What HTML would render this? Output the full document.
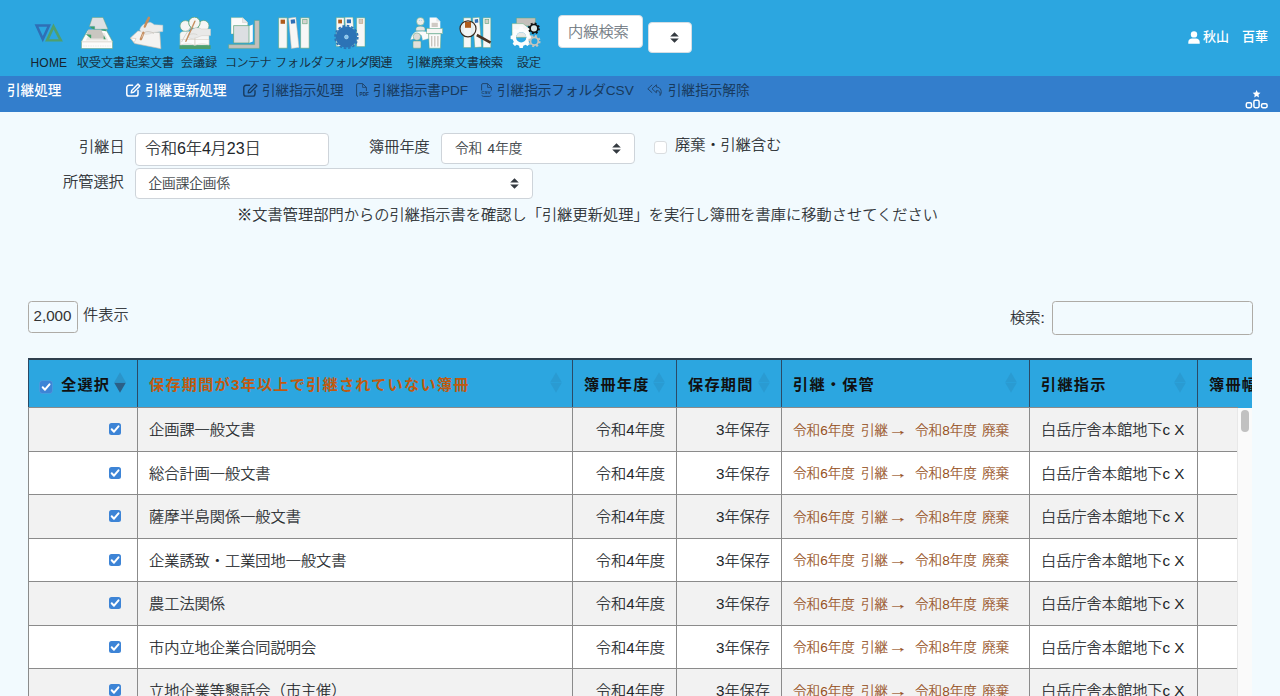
<!DOCTYPE html>
<html lang="ja">
<head>
<meta charset="utf-8">
<title>引継処理</title>
<style>
*{box-sizing:border-box;margin:0;padding:0}
html,body{width:1280px;height:696px;overflow:hidden}
body{background:#f2fafe;font-family:"Liberation Sans","Noto Sans CJK JP",sans-serif;font-size:15.2px;color:#212529;position:relative;font-weight:300;-webkit-text-stroke-width:.22px}
.abs{position:absolute;white-space:nowrap}
#top{position:absolute;left:0;top:0;width:1280px;height:76px;background:#2ca6e0}
#sub{position:absolute;left:0;top:76px;width:1280px;height:36px;background:#337ecc}
.nl{position:absolute;top:56px;font-size:12px;line-height:14px;color:#16232e;font-weight:300;white-space:nowrap}
.ni{position:absolute;top:17px;width:32px;height:32px}
.sl{position:absolute;top:82px;font-size:14px;line-height:16px;white-space:nowrap;color:rgba(10,30,60,.62)}
.sl.on{color:#fff;font-weight:500}
.sl2{font-size:13.6px;line-height:18px;color:#183a5d;font-weight:400;-webkit-text-stroke-width:0}
.lab{position:absolute;font-size:15.2px;line-height:20px;white-space:nowrap;color:#212529}
.box{position:absolute;background:#fff;border:1px solid #ced4da;border-radius:4px}
.th{position:absolute;top:0;height:48px;font-weight:700;-webkit-text-stroke-width:0;letter-spacing:1.2px;line-height:20px;padding-top:15px;color:#111;white-space:nowrap;border-right:1px solid #2b4a66}
.row{position:absolute;left:0;width:1210px;height:44px;border-top:1px solid #8b8b8b}
.row.o{background:#f2f2f2}
.row.e{background:#fff}
.c{position:absolute;top:0;height:43px;line-height:20px;padding-top:12px;white-space:nowrap;border-right:1px solid #8b8b8b}
.cb{position:absolute;width:12px;height:12px;border-radius:2.5px;background:#3d84d6}
.cb svg{position:absolute;left:0;top:0}
.hk{font-size:13.6px;color:#96501c}
.hk span{position:absolute;top:12.5px;line-height:20px}
i{font-style:normal;-webkit-text-stroke-width:0}
</style>
</head>
<body>
<div id="top">
<!-- HOME -->
<svg class="ni" style="left:33px" viewBox="0 0 32 32"><path d="M1.6 7.3H18L9.8 25.3ZM5.5 9.8L9.8 19L14.1 9.8Z" fill="#2f6fb6" fill-rule="evenodd"/><path d="M20.4 6.5L29.9 24.6H12.1ZM20.6 12.6L16.1 22.2H25.7Z" fill="#4f9f6c" fill-rule="evenodd"/></svg>
<div class="nl" style="left:30.5px;letter-spacing:.2px"><i>HOME</i></div>
<!-- tray -->
<svg class="ni" style="left:81px" viewBox="0 0 32 32">
<path d="M6.5 13.5L0.4 24.6V31.6H31.6V24.6L25.5 13.5Z" fill="#fcfcfb" stroke="#6aa27a" stroke-width=".6"/>
<path d="M0.6 24.8H31.4" stroke="#d6cfc6" stroke-width=".8"/>
<path d="M2.2 29H29.8" stroke="#ecebe8" stroke-width="1" stroke-dasharray="1.4 1"/>
<path d="M4.8 23.4L8.4 16H23.6L27.2 23.4Z" fill="#e9e7e3"/>
<path d="M7.4 12.4H20.2L23.8 21.6H11.2L5.4 17.2Z" fill="#c9c6c0"/>
<path d="M11.3 0.5H22L27 12.3H13.6V9.4H8.3Z" fill="#dde0e3" stroke="#6aa27a" stroke-width=".5"/>
<path d="M9 9.7H13.4V12.6L10.4 11.2Z" fill="#3f9f68"/><path d="M4.8 17.2L10.2 17.8V21.8Z" fill="#3f9f68"/><path d="M20 12.6H24.4L25.4 14.4Z" fill="#3f9f68"/><path d="M22.8 18.2L24.8 22.2H22.6Z" fill="#3f9f68"/>
</svg>
<div class="nl" style="left:77px">収受文書</div>
<!-- writing -->
<svg class="ni" style="left:130px;overflow:visible" viewBox="0 0 32 32">
<path d="M0.3 21L7.9 13.9L29.8 15.6L30.9 31.7L4.6 26.5Z" fill="#f4f3f1" stroke="#c9b9a6" stroke-width=".6"/>
<path d="M0.5 21L6 21.6L4.2 25.4Z" fill="#fff" stroke="#c9b9a6" stroke-width=".5"/>
<path d="M18.9 0.8L14.6 10" fill="none" stroke="#c48d5e" stroke-width="2.5" stroke-linecap="round"/>
<path d="M9.8 12.8C10.4 10.4 12 8.4 13.4 7.4L20 5.2C21.6 5.6 23 6.8 24.3 7.7L32.8 8.2V14.5L24.3 15.3C21 16.6 18 17.4 15 17.2C12.6 16.6 10.6 15 9.8 12.8Z" fill="#ebebea" stroke="#cfccc6" stroke-width=".5"/>
<path d="M14.4 15.4C17 14 21 14.6 24 16.4" fill="none" stroke="#c4beb6" stroke-width=".8"/>
<path d="M17.4 3.6L14.8 9.6" fill="none" stroke="#c48d5e" stroke-width="2.3" stroke-linecap="round"/>
<path d="M13.4 15.9L10.9 22.1" fill="none" stroke="#c48d5e" stroke-width="2.5" stroke-linecap="round"/>
<path d="M13.2 16.8L11.6 20.6" fill="none" stroke="#e8d9c8" stroke-width=".7"/>
</svg>
<div class="nl" style="left:126px">起案文書</div>
<!-- meeting -->
<svg class="ni" style="left:178.8px" viewBox="0 0 32 32">
<circle cx="6.4" cy="9" r="5.4" fill="#f5f5f4" stroke="#5fa57a" stroke-width=".7"/><circle cx="24.6" cy="8.8" r="5.4" fill="#f5f5f4" stroke="#5fa57a" stroke-width=".7"/><circle cx="15.4" cy="5.8" r="5.7" fill="#f5f5f4" stroke="#4a9a68" stroke-width=".8"/>
<path d="M0.9 28.4V17.5C0.9 15.4 2.4 14.4 4.6 14.4H26.4C28.6 14.4 30.1 15.4 30.1 17.5V28.4Z" fill="#f5f5f4" stroke="#8fbf9f" stroke-width=".4"/>
<path d="M0.5 28.2H31.6V32H0.5Z" fill="#4f9f6c"/>
<path d="M1.6 28C6 26.4 12 26.4 15.9 28.4C19.8 26.4 25.6 26.4 30 28V22.5H1.6Z" fill="#fbfbfa" stroke="#cfc6ba" stroke-width=".5"/>
<path d="M15.9 20.6V28.4" stroke="#cfc6ba" stroke-width=".8"/>
<path d="M31.6 12H22.4C18.4 9.6 14 10.6 11.2 14.4L8.6 19.4C10 22 14 21.8 17 20.8C19.5 20.2 21.5 19 23 18.6H31.6Z" fill="#e9e9e8" stroke="#cdc9c2" stroke-width=".5"/>
<path d="M10.5 17.6C13 16.4 16 16.6 18.4 17.8" fill="none" stroke="#cdc9c2" stroke-width=".6"/>
<path d="M15.9 4.2L6.9 24.3" stroke="#c48d5e" stroke-width="1.4" stroke-linecap="round"/>
<path d="M12.8 9.6C8.6 14 5 20 2.6 25" fill="none" stroke="#cdc9c2" stroke-width=".8"/>
</svg>
<div class="nl" style="left:181px">会議録</div>
<!-- container -->
<svg class="ni" style="left:228px" viewBox="0 0 32 32">
<path d="M26.6 3.4H31.4V31.4H0.6V27.6H26.6Z" fill="#c4c0bb" stroke="#5fa57a" stroke-width=".5"/>
<path d="M3 0.6H14.5L19.8 5.6V17H3Z" fill="#fbfbfb" stroke="#5fa57a" stroke-width=".4"/>
<path d="M14.5 0.6V5.6H19.8" fill="#e8e8e8" stroke="#cfcac4" stroke-width=".5"/>
<path d="M21 9L24.8 7.6V24.6L21 26Z" fill="#fbfbfb"/>
<path d="M5.6 8.6H21V26H5.6Z" fill="#dcdfe2" stroke="#5fa57a" stroke-width=".7"/>
</svg>
<div class="nl" style="left:225px;letter-spacing:-.5px">コンテナ</div>
<!-- folder -->
<svg class="ni" style="left:277.5px" viewBox="0 0 32 32">
<path d="M0.6 0.8H9.2V31.2H0.6Z" fill="#f7f7f6" stroke="#5fa57a" stroke-width=".6"/><rect x="2.6" y="2.6" width="4.4" height="4.2" fill="#b05c1c"/>
<path d="M10.6 1.2L17.8 0.2L21 30.4L13.4 31.4Z" fill="#f7f7f6" stroke="#c9b9a6" stroke-width=".5"/><path d="M12.6 2.8L16.8 2.2L17.3 6.2L13 6.8Z" fill="#2f6fb6"/>
<path d="M22.6 0.8H31.2V31.2H22.6Z" fill="#f7f7f6" stroke="#5fa57a" stroke-width=".6"/><rect x="24.7" y="2.4" width="4.4" height="4.4" fill="#d6d3ce" stroke="#5fa57a" stroke-width=".6"/>
</svg>
<div class="nl" style="left:275px">フォルダ</div>
<!-- folder related -->
<svg class="ni" style="left:333.5px;height:33px" viewBox="0 0 32 33">
<path d="M2.2 0.6H10.2V29.4H2.2Z" fill="#f7f7f6" stroke="#5fa57a" stroke-width=".5"/><rect x="4.2" y="2.6" width="3.8" height="3.8" fill="#b05c1c"/>
<path d="M10.8 0.2H19L20.6 29H12.4Z" fill="#f7f7f6" stroke="#5fa57a" stroke-width=".5"/><rect x="12.8" y="2.4" width="4.2" height="3.8" fill="#2f6fb6"/>
<path d="M22.6 0.8H31V29.6H22.6Z" fill="#f7f7f6" stroke="#5fa57a" stroke-width=".5"/><rect x="25" y="2.6" width="3.8" height="4" fill="#cfc9c0" stroke="#c09a72" stroke-width=".5"/>
<circle cx="12.4" cy="20" r="10.6" fill="#2c73b6"/>
<circle cx="12.4" cy="20" r="11.3" fill="none" stroke="#2c73b6" stroke-width="1.8" stroke-dasharray="2.6 1.84"/>
<circle cx="12.4" cy="20" r="1.9" fill="#7fc4ee" stroke="#bfe0f5" stroke-width=".6"/>
</svg>
<div class="nl" style="left:323.5px;letter-spacing:-.6px">フォルダ関連</div>
<!-- hikitsugi haiki -->
<svg class="ni" style="left:410px;width:33px" viewBox="0 0 33 32">
<circle cx="10.4" cy="4.4" r="3.9" fill="#ececea" stroke="#5fa57a" stroke-width=".5"/>
<circle cx="9.4" cy="3.6" r=".5" fill="#9fd0ee"/><circle cx="11.4" cy="3.6" r=".5" fill="#9fd0ee"/>
<path d="M5.9 13.8V12C5.9 10 7.6 9.2 10.4 9.2C13.2 9.2 15 10 15 12V13.8Z" fill="#e6e5e2" stroke="#5fa57a" stroke-width=".4"/>
<path d="M0.6 22.8C1.6 18 4 14.8 7.4 14.4L12.6 14.2L18.8 15.2V21.6L12.6 23.2L11.6 18.6C9 16.6 5.4 17.4 4.2 21.6Z" fill="#fbfbfb" stroke="#a9cdb4" stroke-width=".4"/>
<circle cx="6.9" cy="19.6" r="3.7" fill="#dddbd7" stroke="#5fa57a" stroke-width=".5"/>
<rect x="3" y="24" width="8" height="7.2" rx="1" fill="#e2e0dc" stroke="#5fa57a" stroke-width=".5"/>
<path d="M19.6 0.6H26.4L30.3 4.6V11.6H19.6Z" fill="#fbfbfb"/><path d="M26.4 0.6V4.6H30.3Z" fill="#e4e4e4"/><rect x="21.6" y="5.8" width="6.2" height="4.2" fill="#cfcac4"/>
<rect x="16.7" y="11.3" width="16" height="5.4" fill="#f7f6f4" stroke="#5fa57a" stroke-width=".5"/>
<path d="M18.6 16.8H30.9L30.4 31.2H19.2Z" fill="#fbfbfb" stroke="#5fa57a" stroke-width=".5"/>
<path d="M21.7 19V29.6M24.8 19V29.6M27.9 19V29.6" stroke="#c6c1ba" stroke-width="1.3"/>
</svg>
<div class="nl" style="left:407px">引継廃棄</div>
<!-- search -->
<svg class="ni" style="left:458.5px;width:33px" viewBox="0 0 33 32">
<path d="M4.6 0.8H12V30.6H4.6Z" fill="#f7f7f6" stroke="#5fa57a" stroke-width=".5"/>
<path d="M13.6 0.8L20.4 0.2L22.6 30L15.8 30.6Z" fill="#f7f7f6" stroke="#5fa57a" stroke-width=".5"/><path d="M15.6 2.4L19 2.1L19.3 5.6L15.9 5.9Z" fill="#2f6fb6"/>
<path d="M24 0.8H31.8V30.6H24Z" fill="#f7f7f6" stroke="#5fa57a" stroke-width=".5"/><rect x="26" y="2.6" width="3.8" height="4" fill="#d3cfc8" stroke="#5fa57a" stroke-width=".6"/>
<circle cx="9" cy="11.8" r="8" fill="#f4f4f3" fill-opacity=".92" stroke="#3a2a1e" stroke-width="1.2"/>
<rect x="6" y="5" width="6" height="5.8" fill="#b05c1c"/>
<path d="M17.8 18L31.6 25.6" stroke="#4a3424" stroke-width="2.6"/>
</svg>
<div class="nl" style="left:455px">文書検索</div>
<!-- settings -->
<svg class="ni" style="left:509.5px" viewBox="0 0 32 32">
<path d="M6.4 1H25.4V9H6.4Z" fill="#c4c0bb" stroke="#5fa57a" stroke-width=".5"/>
<path d="M2 6.6H13L20 12V22H2Z" fill="#f7f7f6" stroke="#5fa57a" stroke-width=".5"/>
<g transform="translate(11.2 20.4)"><path id="g1" d="M-1.9 -10.6H1.9L2.5 -8C3.5 -7.7 4.4 -7.3 5.2 -6.8L7.5 -8.2L10.2 -5.5L8.8 -3.2C9.3 -2.4 9.7 -1.5 9.9 -0.5L12.6 0.1V3.9L10 4.5C9.7 5.5 9.3 6.4 8.8 7.2L10.2 9.5L7.5 12.2L5.2 10.8C4.4 11.3 3.5 11.7 2.5 12L1.9 14.6H-1.9L-2.5 12C-3.5 11.7 -4.4 11.3 -5.2 10.8L-7.5 12.2L-10.2 9.5L-8.8 7.2C-9.3 6.4 -9.7 5.5 -10 4.5L-12.6 3.9V0.1L-10 -0.5C-9.7 -1.5 -9.3 -2.4 -8.8 -3.2L-10.2 -5.5L-7.5 -8.2L-5.2 -6.8C-4.4 -7.3 -3.5 -7.7 -2.5 -8Z" transform="translate(0 -1.7) scale(.84)" fill="#fdfdfd"/>
<circle cx="0" cy="0" r="5.1" fill="#2ca6e0"/><path d="M-5.1 0A5.1 5.1 0 0 1 5.1 0Z" fill="#e9e8e5"/><path d="M-5.1 0H5.1" stroke="#5fa57a" stroke-width=".6"/></g>
<g transform="translate(24 11.4)"><circle r="3.9" fill="#d9e6e4" stroke="#111" stroke-width="1.7"/><circle r="5" fill="none" stroke="#111" stroke-width="1.9" stroke-dasharray="1.9 2.03"/></g>
<g transform="translate(24.4 24.2)"><circle r="3.9" fill="#2ca6e0" stroke="#c9c4bc" stroke-width="1.8"/><circle r="5.2" fill="none" stroke="#c9c4bc" stroke-width="1.9" stroke-dasharray="2 2.08"/></g>
</svg>
<div class="nl" style="left:517px">設定</div>
<!-- search input -->
<div class="abs" style="left:558px;top:15px;width:85px;height:33px;background:#fff;border-radius:4px;border:1px solid #d4dde4"></div>
<div class="abs" style="left:568px;top:22px;font-size:15.2px;line-height:20px;color:#6c757d">内線検索</div>
<div class="abs" style="left:648px;top:22px;width:44px;height:31px;background:#fff;border-radius:4px;border:1px solid #d4dde4"></div>
<svg class="abs" style="left:670px;top:32px" width="9" height="11" viewBox="0 0 9 11"><path d="M4.5 0.2L8.8 4.5H0.2ZM4.5 10.8L0.2 6.5H8.8Z" fill="#343a40"/></svg>
<!-- user -->
<svg class="abs" style="left:1188px;top:31px" width="12" height="13" viewBox="0 0 12 13"><circle cx="6" cy="3.4" r="3.2" fill="#fff"/><path d="M0.3 12.8V11C0.3 8.6 2 7.4 4 7.4H8C10 7.4 11.7 8.6 11.7 11V12.8Z" fill="#fff"/></svg>
<div class="abs" style="left:1203px;top:28px;font-size:13px;line-height:18px;color:#fff;font-weight:500;-webkit-text-stroke-width:0">秋山　百華</div>
</div>
<div id="sub">
<div class="abs" style="left:7px;top:6px;font-size:13.6px;line-height:18px;color:#fff;font-weight:500;-webkit-text-stroke-width:0">引継処理</div>
<svg class="abs" style="left:126px;top:7px" width="15" height="14" viewBox="0 0 15 14"><path d="M6.6 2.3H3A2.2 2.2 0 0 0 0.8 4.5V10.9A2.2 2.2 0 0 0 3 13.1H9.8A2.2 2.2 0 0 0 12 10.9V7.6" fill="none" stroke="#fff" stroke-width="1.5" stroke-linecap="round"/><path d="M12 1.1L13.9 3L7.6 9.3L5.2 9.8L5.7 7.4Z" fill="none" stroke="#fff" stroke-width="1.4" stroke-linejoin="round"/></svg>
<div class="abs" style="left:145px;top:6px;font-size:13.6px;line-height:18px;color:#fff;font-weight:500;-webkit-text-stroke-width:0">引継更新処理</div>
<svg class="abs" style="left:242.5px;top:7px" width="15" height="14" viewBox="0 0 15 14"><path d="M6.6 2.3H3A2.2 2.2 0 0 0 0.8 4.5V10.9A2.2 2.2 0 0 0 3 13.1H9.8A2.2 2.2 0 0 0 12 10.9V7.6" fill="none" stroke="#183a5d" stroke-width="1.4" stroke-linecap="round"/><path d="M12 1.1L13.9 3L7.6 9.3L5.2 9.8L5.7 7.4Z" fill="none" stroke="#183a5d" stroke-width="1.3" stroke-linejoin="round"/></svg>
<div class="abs sl2" style="left:262px;top:6px">引継指示処理</div>
<svg class="abs" style="left:356px;top:7px;overflow:visible" width="11" height="14" viewBox="0 0 11 14"><path d="M0.6 12V2A1.4 1.4 0 0 1 2 0.6H6.6L10.4 4.4V8" fill="none" stroke="#21466e" stroke-width="1"/><path d="M6.6 0.6V4.4H10.4" fill="none" stroke="#21466e" stroke-width=".9"/><path d="M0.6 12A1.4 1.4 0 0 0 2 13.4" fill="none" stroke="#21466e" stroke-width="1"/><text x="3.6" y="13.3" font-size="4.7" font-weight="700" font-family="Liberation Sans,sans-serif" fill="#183a5d">PDF</text></svg>
<div class="abs sl2" style="left:373px;top:6px">引継指示書<i>PDF</i></div>
<svg class="abs" style="left:481px;top:7px" width="11" height="14" viewBox="0 0 11 14"><path d="M0.6 7.5V2A1.4 1.4 0 0 1 2 0.6H6.6L10.4 4.4V7.5" fill="none" stroke="#21466e" stroke-width="1"/><path d="M6.6 0.6V4.4H10.4" fill="none" stroke="#21466e" stroke-width=".9"/><path d="M1 12.4A1.4 1.4 0 0 0 2.4 13.4H8.6A1.4 1.4 0 0 0 10 12.4" fill="none" stroke="#21466e" stroke-width="1"/><text x="0.6" y="11.4" font-size="4.4" font-weight="700" font-family="Liberation Sans,sans-serif" fill="#183a5d">CSV</text></svg>
<div class="abs sl2" style="left:497px;top:6px">引継指示フォルダ<i>CSV</i></div>
<svg class="abs" style="left:647px;top:7.5px" width="16" height="13" viewBox="0 0 16 13"><path d="M5.2 0.8L0.8 4.8L5.2 8.8" fill="none" stroke="#21466e" stroke-width="1"/><path d="M9.4 0.8L5 4.8L9.4 8.8V6.6C12.4 6.6 13.6 8 13 11.6C15.4 8.6 14.4 3.2 9.4 3Z" fill="none" stroke="#21466e" stroke-width="1" stroke-linejoin="round"/></svg>
<div class="abs sl2" style="left:668px;top:6px">引継指示解除</div>
<svg class="abs" style="left:1245px;top:14px" width="24" height="19" viewBox="0 0 24 19"><path d="M11.6 0L12.75 2.5L15.5 2.85L13.45 4.7L14 7.4L11.6 6.05L9.2 7.4L9.75 4.7L7.7 2.85L10.45 2.5Z" fill="#fff"/><rect x="8.9" y="10.3" width="5.2" height="7.4" rx="1.4" fill="none" stroke="#fff" stroke-width="1.5"/><rect x="1.3" y="12.8" width="5.2" height="4.9" rx="1.4" fill="none" stroke="#fff" stroke-width="1.5"/><rect x="16.5" y="13.8" width="5.6" height="3.9" rx="1.4" fill="none" stroke="#fff" stroke-width="1.5"/></svg>
</div>
<div id="main">
<div class="lab" style="left:79px;top:137.3px">引継日</div>
<div class="box" style="left:135px;top:133px;width:193.5px;height:32.5px"></div>
<div class="abs" style="left:145px;top:139px;font-size:16px;line-height:20px;color:#212529">令和<i>6</i>年<i>4</i>月<i>23</i>日</div>
<div class="lab" style="left:369px;top:137px">簿冊年度</div>
<div class="box" style="left:441px;top:133px;width:193.5px;height:30.5px"></div>
<div class="abs" style="left:455px;top:140px;font-size:13.6px;word-spacing:1.6px;line-height:18px;color:#343a40">令和 <i>4</i>年度</div>
<svg class="abs" style="left:612px;top:142.7px" width="9" height="11" viewBox="0 0 9 11"><path d="M4.5 0.2L8.8 4.5H0.2ZM4.5 10.8L0.2 6.5H8.8Z" fill="#343a40"/></svg>
<div class="abs" style="left:654px;top:141.3px;width:12.5px;height:12.5px;border:1px solid #dadde0;border-radius:3px;background:#fff"></div>
<div class="lab" style="left:675px;top:135px">廃棄・引継含む</div>
<div class="lab" style="left:63px;top:172px">所管選択</div>
<div class="box" style="left:135px;top:168px;width:398px;height:31px"></div>
<div class="abs" style="left:148.5px;top:174.5px;font-size:13.6px;line-height:18px;color:#343a40">企画課企画係</div>
<svg class="abs" style="left:510.2px;top:177.6px" width="9" height="11" viewBox="0 0 9 11"><path d="M4.5 0.2L8.8 4.5H0.2ZM4.5 10.8L0.2 6.5H8.8Z" fill="#343a40"/></svg>
<div class="lab" style="left:237px;top:205px;letter-spacing:.06px">※文書管理部門からの引継指示書を確認し「引継更新処理」を実行し簿冊を書庫に移動させてください</div>
<div class="box" style="left:27.5px;top:301px;width:50px;height:32px;border-color:#aeaba6;background:transparent;border-radius:3.5px"></div>
<div class="abs" style="left:33.5px;top:305.5px;font-size:15.2px;line-height:20px;color:#333"><i>2,000</i></div>
<div class="lab" style="left:83px;top:304.5px">件表示</div>
<div class="lab" style="left:1010px;top:307.5px">検索:</div>
<div class="box" style="left:1052px;top:301px;width:200.5px;height:33.5px;border-color:#aeaba6;background:transparent;border-radius:3.5px"></div>
<div id="tbl" style="position:absolute;left:28px;top:358px;width:1224px;height:338px;overflow:hidden">
<div id="thead" style="position:absolute;left:0;top:0;width:1224px;height:50px;background:#2ca6e0;border-top:2px solid #2f3f4d;border-left:1px solid #2b4a66"></div>
<div id="hc" style="position:absolute;left:0;top:2px;width:1300px;height:48px">
<div class="th" style="left:0px;width:110px;padding-left:33px;">全選択</div>
<svg class="abs" style="left:86px;top:12px" width="12" height="21" viewBox="0 0 12 21"><path d="M6 0.2L11.8 10.2H0.2Z" fill="#2b94c9"/><path d="M6 20.8L0.2 10.8H11.8Z" fill="#2b5f86"/></svg>
<div class="th" style="left:110px;width:435px;padding-left:11px;color:#c05a10;">保存期間が3年以上で引継されていない簿冊</div>
<svg class="abs" style="left:522px;top:12px" width="12" height="21" viewBox="0 0 12 21"><path d="M6 0.2L11.8 10.2H0.2Z" fill="#2a9bd2"/><path d="M6 20.8L0.2 10.8H11.8Z" fill="#2a9bd2"/></svg>
<div class="th" style="left:545px;width:104px;padding-left:11px;">簿冊年度</div>
<svg class="abs" style="left:625px;top:12px" width="12" height="21" viewBox="0 0 12 21"><path d="M6 0.2L11.8 10.2H0.2Z" fill="#2a9bd2"/><path d="M6 20.8L0.2 10.8H11.8Z" fill="#2a9bd2"/></svg>
<div class="th" style="left:649px;width:105px;padding-left:11px;">保存期間</div>
<svg class="abs" style="left:729.5px;top:12px" width="12" height="21" viewBox="0 0 12 21"><path d="M6 0.2L11.8 10.2H0.2Z" fill="#2a9bd2"/><path d="M6 20.8L0.2 10.8H11.8Z" fill="#2a9bd2"/></svg>
<div class="th" style="left:754px;width:248px;padding-left:11px;">引継・保管</div>
<svg class="abs" style="left:977px;top:12px" width="12" height="21" viewBox="0 0 12 21"><path d="M6 0.2L11.8 10.2H0.2Z" fill="#2a9bd2"/><path d="M6 20.8L0.2 10.8H11.8Z" fill="#2a9bd2"/></svg>
<div class="th" style="left:1002px;width:168px;padding-left:11px;">引継指示</div>
<svg class="abs" style="left:1145.5px;top:12px" width="12" height="21" viewBox="0 0 12 21"><path d="M6 0.2L11.8 10.2H0.2Z" fill="#2a9bd2"/><path d="M6 20.8L0.2 10.8H11.8Z" fill="#2a9bd2"/></svg>
<div class="th" style="left:1170px;width:80px;padding-left:11px;">簿冊幅</div>
</div>
<div class="cb" style="left:11.5px;top:22.8px;box-shadow:0 0 0 .6px #5a93dc"><svg width="12" height="12" viewBox="0 0 12 12"><path d="M2.7 6.2L5 8.7L9.5 3.3" fill="none" stroke="#fff" stroke-width="2" stroke-linecap="round" stroke-linejoin="round"/></svg></div>
<div class="row o" style="top:49.0px">
<div class="c" style="left:0;width:110px;border-left:1px solid #8b8b8b"></div><div class="cb" style="left:81px;top:15.3px"><svg width="12" height="12" viewBox="0 0 12 12"><path d="M2.7 6.2L5 8.7L9.5 3.3" fill="none" stroke="#fff" stroke-width="2" stroke-linecap="round" stroke-linejoin="round"/></svg></div>
<div class="c" style="left:110px;width:435px;padding-left:11px">企画課一般文書</div>
<div class="c" style="left:545px;width:104px;text-align:right;padding-right:11px">令和<i>4</i>年度</div>
<div class="c" style="left:649px;width:105px;text-align:right;padding-right:11px"><i>3</i>年保存</div>
<div class="c hk" style="left:754px;width:248px"><span style="left:11px">令和<i>6</i>年度</span><span style="left:79px">引継</span><span style="left:109px;font-family:'Liberation Sans',sans-serif;transform:scaleX(1.4)">→</span><span style="left:133px">令和<i>8</i>年度</span><span style="left:200px">廃棄</span></div>
<div class="c" style="left:1002px;width:168px;padding-left:11px">白岳庁舎本館地下<i>c X</i></div>
</div>
<div class="row e" style="top:92.5px">
<div class="c" style="left:0;width:110px;border-left:1px solid #8b8b8b"></div><div class="cb" style="left:81px;top:15.3px"><svg width="12" height="12" viewBox="0 0 12 12"><path d="M2.7 6.2L5 8.7L9.5 3.3" fill="none" stroke="#fff" stroke-width="2" stroke-linecap="round" stroke-linejoin="round"/></svg></div>
<div class="c" style="left:110px;width:435px;padding-left:11px">総合計画一般文書</div>
<div class="c" style="left:545px;width:104px;text-align:right;padding-right:11px">令和<i>4</i>年度</div>
<div class="c" style="left:649px;width:105px;text-align:right;padding-right:11px"><i>3</i>年保存</div>
<div class="c hk" style="left:754px;width:248px"><span style="left:11px">令和<i>6</i>年度</span><span style="left:79px">引継</span><span style="left:109px;font-family:'Liberation Sans',sans-serif;transform:scaleX(1.4)">→</span><span style="left:133px">令和<i>8</i>年度</span><span style="left:200px">廃棄</span></div>
<div class="c" style="left:1002px;width:168px;padding-left:11px">白岳庁舎本館地下<i>c X</i></div>
</div>
<div class="row o" style="top:136.0px">
<div class="c" style="left:0;width:110px;border-left:1px solid #8b8b8b"></div><div class="cb" style="left:81px;top:15.3px"><svg width="12" height="12" viewBox="0 0 12 12"><path d="M2.7 6.2L5 8.7L9.5 3.3" fill="none" stroke="#fff" stroke-width="2" stroke-linecap="round" stroke-linejoin="round"/></svg></div>
<div class="c" style="left:110px;width:435px;padding-left:11px">薩摩半島関係一般文書</div>
<div class="c" style="left:545px;width:104px;text-align:right;padding-right:11px">令和<i>4</i>年度</div>
<div class="c" style="left:649px;width:105px;text-align:right;padding-right:11px"><i>3</i>年保存</div>
<div class="c hk" style="left:754px;width:248px"><span style="left:11px">令和<i>6</i>年度</span><span style="left:79px">引継</span><span style="left:109px;font-family:'Liberation Sans',sans-serif;transform:scaleX(1.4)">→</span><span style="left:133px">令和<i>8</i>年度</span><span style="left:200px">廃棄</span></div>
<div class="c" style="left:1002px;width:168px;padding-left:11px">白岳庁舎本館地下<i>c X</i></div>
</div>
<div class="row e" style="top:179.5px">
<div class="c" style="left:0;width:110px;border-left:1px solid #8b8b8b"></div><div class="cb" style="left:81px;top:15.3px"><svg width="12" height="12" viewBox="0 0 12 12"><path d="M2.7 6.2L5 8.7L9.5 3.3" fill="none" stroke="#fff" stroke-width="2" stroke-linecap="round" stroke-linejoin="round"/></svg></div>
<div class="c" style="left:110px;width:435px;padding-left:11px">企業誘致・工業団地一般文書</div>
<div class="c" style="left:545px;width:104px;text-align:right;padding-right:11px">令和<i>4</i>年度</div>
<div class="c" style="left:649px;width:105px;text-align:right;padding-right:11px"><i>3</i>年保存</div>
<div class="c hk" style="left:754px;width:248px"><span style="left:11px">令和<i>6</i>年度</span><span style="left:79px">引継</span><span style="left:109px;font-family:'Liberation Sans',sans-serif;transform:scaleX(1.4)">→</span><span style="left:133px">令和<i>8</i>年度</span><span style="left:200px">廃棄</span></div>
<div class="c" style="left:1002px;width:168px;padding-left:11px">白岳庁舎本館地下<i>c X</i></div>
</div>
<div class="row o" style="top:223.0px">
<div class="c" style="left:0;width:110px;border-left:1px solid #8b8b8b"></div><div class="cb" style="left:81px;top:15.3px"><svg width="12" height="12" viewBox="0 0 12 12"><path d="M2.7 6.2L5 8.7L9.5 3.3" fill="none" stroke="#fff" stroke-width="2" stroke-linecap="round" stroke-linejoin="round"/></svg></div>
<div class="c" style="left:110px;width:435px;padding-left:11px">農工法関係</div>
<div class="c" style="left:545px;width:104px;text-align:right;padding-right:11px">令和<i>4</i>年度</div>
<div class="c" style="left:649px;width:105px;text-align:right;padding-right:11px"><i>3</i>年保存</div>
<div class="c hk" style="left:754px;width:248px"><span style="left:11px">令和<i>6</i>年度</span><span style="left:79px">引継</span><span style="left:109px;font-family:'Liberation Sans',sans-serif;transform:scaleX(1.4)">→</span><span style="left:133px">令和<i>8</i>年度</span><span style="left:200px">廃棄</span></div>
<div class="c" style="left:1002px;width:168px;padding-left:11px">白岳庁舎本館地下<i>c X</i></div>
</div>
<div class="row e" style="top:266.5px">
<div class="c" style="left:0;width:110px;border-left:1px solid #8b8b8b"></div><div class="cb" style="left:81px;top:15.3px"><svg width="12" height="12" viewBox="0 0 12 12"><path d="M2.7 6.2L5 8.7L9.5 3.3" fill="none" stroke="#fff" stroke-width="2" stroke-linecap="round" stroke-linejoin="round"/></svg></div>
<div class="c" style="left:110px;width:435px;padding-left:11px">市内立地企業合同説明会</div>
<div class="c" style="left:545px;width:104px;text-align:right;padding-right:11px">令和<i>4</i>年度</div>
<div class="c" style="left:649px;width:105px;text-align:right;padding-right:11px"><i>3</i>年保存</div>
<div class="c hk" style="left:754px;width:248px"><span style="left:11px">令和<i>6</i>年度</span><span style="left:79px">引継</span><span style="left:109px;font-family:'Liberation Sans',sans-serif;transform:scaleX(1.4)">→</span><span style="left:133px">令和<i>8</i>年度</span><span style="left:200px">廃棄</span></div>
<div class="c" style="left:1002px;width:168px;padding-left:11px">白岳庁舎本館地下<i>c X</i></div>
</div>
<div class="row o" style="top:310.0px">
<div class="c" style="left:0;width:110px;border-left:1px solid #8b8b8b"></div><div class="cb" style="left:81px;top:15.3px"><svg width="12" height="12" viewBox="0 0 12 12"><path d="M2.7 6.2L5 8.7L9.5 3.3" fill="none" stroke="#fff" stroke-width="2" stroke-linecap="round" stroke-linejoin="round"/></svg></div>
<div class="c" style="left:110px;width:435px;padding-left:11px">立地企業等懇話会（市主催）</div>
<div class="c" style="left:545px;width:104px;text-align:right;padding-right:11px">令和<i>4</i>年度</div>
<div class="c" style="left:649px;width:105px;text-align:right;padding-right:11px"><i>3</i>年保存</div>
<div class="c hk" style="left:754px;width:248px"><span style="left:11px">令和<i>6</i>年度</span><span style="left:79px">引継</span><span style="left:109px;font-family:'Liberation Sans',sans-serif;transform:scaleX(1.4)">→</span><span style="left:133px">令和<i>8</i>年度</span><span style="left:200px">廃棄</span></div>
<div class="c" style="left:1002px;width:168px;padding-left:11px">白岳庁舎本館地下<i>c X</i></div>
</div>
<div style="position:absolute;left:1209px;top:50px;width:15px;height:300px;background:#fafafa;border-left:1px solid #e8e8e8"></div>
<div style="position:absolute;left:1213px;top:52px;width:8px;height:22px;border-radius:4px;background:#c1c1c1"></div>
</div>
</div>
</body>
</html>
